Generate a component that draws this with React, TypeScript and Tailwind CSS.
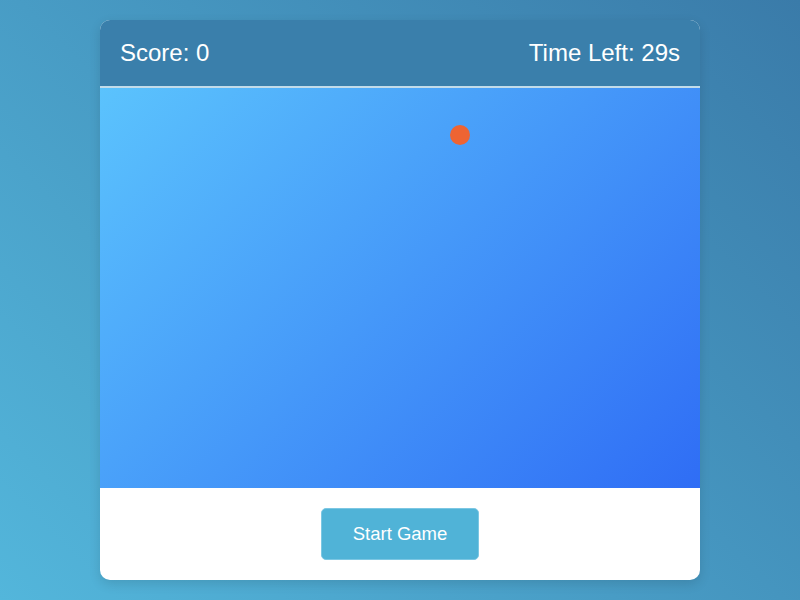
export default function App() {
  const score = 0
  const timeLeft = 29
  const ball = { x: 350, y: 37 }

  return (
    <div
      className="min-h-screen w-full flex items-center justify-center bg-[linear-gradient(45deg,#53b6db,#3a7ba9)]"
      style={{ fontFamily: '"Liberation Sans", Arial, sans-serif' }}
    >
      <div className="w-[600px] rounded-[10px] overflow-hidden bg-white shadow-[0_4px_12px_rgba(0,0,0,0.12)]">
        {/* Header */}
        <div className="h-[68px] flex items-center justify-between px-5 bg-[#3a7fab] text-white text-2xl leading-7 border-b-2 border-[#c2dcea]">
          <span>Score: {score}</span>
          <span>Time Left: {timeLeft}s</span>
        </div>

        {/* Game area */}
        <div className="relative h-[400px] bg-[linear-gradient(135deg,#5bc3fd,#2f6df5)]">
          <div
            className="absolute w-5 h-5 rounded-full bg-[#ee6433]"
            style={{ left: ball.x, top: ball.y }}
          />
        </div>

        {/* Footer */}
        <div className="flex justify-center py-5">
          <button className="w-[158px] h-[52px] rounded-[5px] bg-[#50b3d7] border border-[#7cc7e3] text-white text-[18.5px]">
            Start Game
          </button>
        </div>
      </div>
    </div>
  )
}
